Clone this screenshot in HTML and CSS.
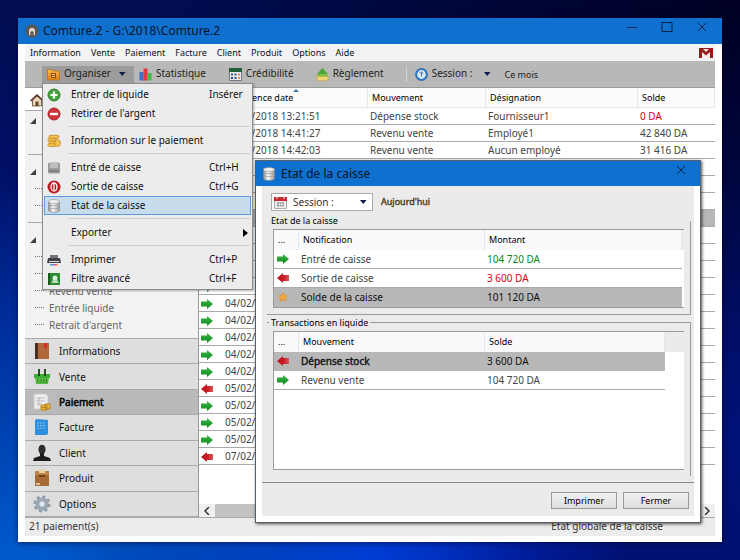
FILE: index.html
```html
<!DOCTYPE html>
<html lang="fr">
<head>
<meta charset="utf-8">
<title>Comture.2</title>
<link rel="stylesheet" href="styles.css">
</head>
<body>
<svg class="defs" aria-hidden="true">
  <defs>
    <linearGradient id="gGreen" x1="0" y1="0" x2="0" y2="1"><stop offset="0" stop-color="#3fb648"/><stop offset="1" stop-color="#0a8a1c"/></linearGradient>
    <linearGradient id="gRed" x1="0" y1="0" x2="1" y2="0"><stop offset="0" stop-color="#b80f18"/><stop offset=".6" stop-color="#cc1f27"/><stop offset="1" stop-color="#d85a5e"/></linearGradient>
    <linearGradient id="gSilver" x1="0" y1="0" x2="1" y2="0"><stop offset="0" stop-color="#8e8e8e"/><stop offset=".4" stop-color="#fafafa"/><stop offset="1" stop-color="#9a9a9a"/></linearGradient>
    <linearGradient id="gOrange" x1="0" y1="0" x2="0" y2="1"><stop offset="0" stop-color="#fbb84a"/><stop offset="1" stop-color="#e08412"/></linearGradient>
    <symbol id="in" viewBox="0 0 12 10"><path d="M0 2.500h6V0l6 5-6 5V7.500H0z" fill="url(#gGreen)"/></symbol>
    <symbol id="out" viewBox="0 0 12 10"><path d="M12 2H6V0L0 5l6 5V8h6z" fill="url(#gRed)"/></symbol>
    <symbol id="star" viewBox="0 0 12 12"><path d="M6 .5l1.700 3.600 3.800.5-2.800 2.700.8 3.900L6 9.500l-3.500 1.700.8-3.900L.5 4.600l3.800-.5z" fill="#f0a840" stroke="#d8922e" stroke-width=".8"/></symbol>
    <symbol id="db" viewBox="0 0 14 14"><path d="M1.500 2.500v9c0 1 2.500 2 5.500 2s5.500-1 5.500-2v-9z" fill="url(#gSilver)" stroke="#888" stroke-width=".6"/><path d="M1.500 5.500c1 1.500 10 1.500 11 0M1.500 8.500c1 1.500 10 1.500 11 0" fill="none" stroke="#999" stroke-width=".7"/><ellipse cx="7" cy="2.500" rx="5.500" ry="2" fill="#eee" stroke="#999" stroke-width=".6"/></symbol>
    <symbol id="coins" viewBox="0 0 14 14"><g fill="#f4c552" stroke="#bf8420" stroke-width=".8"><rect x="1" y="9.500" width="8" height="3" rx="1.400"/><rect x="2" y="6.800" width="8" height="3" rx="1.400"/><rect x="1" y="4" width="8" height="3" rx="1.400"/><rect x="2" y="1.300" width="10" height="3" rx="1.400"/><ellipse cx="10.500" cy="9" rx="2.800" ry="3.500"/></g></symbol>
    <symbol id="down" viewBox="0 0 8 5"><path d="M1 0h6.500L4.250 4z" fill="#101a48"/></symbol>
    <symbol id="node" viewBox="0 0 6 6"><path d="M6 0v6H0z" fill="#404040"/></symbol>
  </defs>
</svg>

<main class="window">
  <header class="titlebar">
    <svg class="i14" viewBox="0 0 14 14"><circle cx="7" cy="7" r="6.500" fill="#5c5650"/><path d="M4 11V5.500L5.500 4h3L10 5.500V11H8.500V7.500h-3V11z" fill="#d8d2cb"/></svg>
    <h1>Comture.2 - G:\2018\Comture.2</h1>
    <div class="winctl">
      <button aria-label="Réduire"><svg viewBox="0 0 12 12"><path d="M1 6.500h10"/></svg></button>
      <button aria-label="Agrandir"><svg viewBox="0 0 12 12"><path d="M1 1.500h10v9H1z"/></svg></button>
      <button aria-label="Fermer"><svg viewBox="0 0 12 12"><path d="M2 2l8 8M10 2l-8 8"/></svg></button>
    </div>
  </header>
  <div class="client">
    <nav class="menubar">
      <button>Information</button><button>Vente</button><button>Paiement</button><button>Facture</button><button>Client</button><button>Produit</button><button>Options</button><button>Aide</button>
      <svg class="mail" viewBox="0 0 14 10"><path d="M0 0h14v10H0z" fill="#fbeeee"/><path d="M0 0h3l4 4 4-4h3v10h-3V4L7 7.500 3 4v6H0z" fill="#a3141b"/><path d="M0 .500h14" stroke="#a3141b"/></svg>
    </nav>

    <div class="toolbar">
      <div class="organise">
        <button class="tool tool-open">
          <svg class="i13" viewBox="0 0 13 13"><path d="M.5 1.500H5L6 3h6.500v9H.5z" fill="url(#gOrange)" stroke="#b86e14" stroke-width=".7"/><path d="M4 5h5v5H4z" fill="#8a4a0a"/><path d="M5 6h3v1H5zM5 8h3v1H5z" fill="#fbd28a"/></svg>
          <span>Organiser</span><svg class="caret"><use href="#down"/></svg>
        </button>
        <div class="menu">
          <button class="item"><svg class="i14" viewBox="0 0 14 14"><circle cx="7" cy="7" r="6" fill="#45a33c" stroke="#2d7a28"/><path d="M7 3.500v7M3.500 7h7" stroke="#fff" stroke-width="2.200"/></svg><span>Entrer de liquide</span><kbd>Insérer</kbd></button>
          <button class="item"><svg class="i14" viewBox="0 0 14 14"><circle cx="7" cy="7" r="6" fill="#cf3238" stroke="#a5252a"/><path d="M3 7h8" stroke="#fff" stroke-width="2.400"/></svg><span>Retirer de l'argent</span></button>
          <hr>
          <button class="item"><svg class="i14"><use href="#coins"/></svg><span>Information sur le paiement</span></button>
          <hr>
          <button class="item"><svg class="i14" viewBox="0 0 14 14"><rect x="1" y="1.500" width="12" height="11" rx="1.500" fill="#9b9b9b"/><path d="M3 2h8v5H3z" fill="#bdbdbd"/><path d="M2 9h10v2H2z" fill="#808080"/></svg><span>Entré de caisse</span><kbd>Ctrl+H</kbd></button>
          <button class="item"><svg class="i14" viewBox="0 0 14 14"><circle cx="7" cy="7" r="6.500" fill="#c3161f"/><ellipse cx="7" cy="7" rx="3" ry="4" fill="none" stroke="#fff" stroke-width="1.300"/><path d="M7 4v6" stroke="#fff" stroke-width="1.300"/></svg><span>Sortie de caisse</span><kbd>Ctrl+G</kbd></button>
          <button class="item item-active"><svg class="i14"><use href="#db"/></svg><span>Etat de la caisse</span></button>
          <hr>
          <button class="item"><svg class="i14"></svg><span>Exporter</span><svg class="sub" viewBox="0 0 5 8"><path d="M0 0l5 4-5 4z"/></svg></button>
          <hr>
          <button class="item"><svg class="i14" viewBox="0 0 14 14"><path d="M3 2h8v4H3z" fill="#777"/><path d="M1 5h12l1 5H0z" fill="#3f4247"/><path d="M2 8h10v1H2z" fill="#ddd"/><path d="M2 10h10l1 3H1z" fill="#efe6f4"/><path d="M3 11h3v1.500H3z" fill="#3aa6dd"/><path d="M6 11h3v1.500H6z" fill="#de4fa8"/><path d="M9 11h2v1.500H9z" fill="#f08a3c"/></svg><span>Imprimer</span><kbd>Ctrl+P</kbd></button>
          <button class="item"><svg class="i14" viewBox="0 0 14 14"><path d="M2 1h11v12H2z" fill="#2c8a33"/><path d="M1 1h2v12H1z" fill="#195a20"/><circle cx="8" cy="6" r="2.500" fill="#d9f2d8"/><path d="M4 11l2-3h4l2 3z" fill="#b5dcb4"/></svg><span>Filtre avancé</span><kbd>Ctrl+F</kbd></button>
        </div>
      </div>
      <button class="tool"><svg class="i13" viewBox="0 0 13 13"><path d="M.5 4h4v8.500h-4z" fill="#3c6fc9"/><path d="M4.500.5h4v12h-4z" fill="#dd3a44"/><path d="M8.500 5h4v7.500h-4z" fill="#4db34a"/></svg><span>Statistique</span></button>
      <button class="tool tool-cred"><svg class="i13" viewBox="0 0 13 13"><path d="M.5.500h12v12H.5z" fill="#e8ecf0" stroke="#778"/><path d="M0 0h13v4H0z" fill="#20613a"/><path d="M2 5.500h2v2H2zM5.500 5.500h2v2h-2zM2 9h2v2H2zM5.500 9h2v2h-2z" fill="#34507c"/><path d="M9 5.500h2v2H9zM9 9h2v2H9z" fill="#e0913a"/></svg><span>Crédibilité</span></button>
      <button class="tool tool-regl"><svg class="i13" viewBox="0 0 13 13"><path d="M6.500 0L12 6H1z" fill="#4ea53c"/><path d="M1 6h11v3H1z" fill="#7fbf4c"/><path d="M1 8.500h11v4H1z" fill="#f0d478" stroke="#c9a23c" stroke-width=".6"/></svg><span>Règlement</span></button>
      <i class="vr"></i>
      <button class="tool"><svg class="i13" viewBox="0 0 13 13"><circle cx="6.500" cy="6.500" r="5.400" fill="#d8e8f7" stroke="#2f73bd" stroke-width="2"/><path d="M6.500 3.500v5M4.500 5h4" stroke="#5d7f9f" fill="none"/></svg><span>Session :</span><svg class="caret caret-sess"><use href="#down"/></svg></button>
      <span class="period">Ce mois</span>
    </div>

    <div class="body">
      <aside class="side">
        <div class="home"><svg class="i14" viewBox="0 0 14 14"><path d="M2.500 7v6h9V7L7 3z" fill="#e9d9ba" stroke="#5a4836" stroke-width=".8"/><path d="M0 7.500L7 1l7 6.500-1 1L7 3 1 8.500z" fill="#5a3420"/><path d="M5.500 8.500h3V13h-3z" fill="#6b432a"/></svg></div>
        <ul class="tree">
          <li><svg class="node"><use href="#node"/></svg></li>
          <li></li><li class="cut"></li>
          <li><svg class="node"><use href="#node"/></svg></li>
          <li class="leaf"></li><li class="leaf"></li><li class="cut"></li>
          <li><svg class="node"><use href="#node"/></svg></li>
          <li class="leaf"></li><li class="leaf"></li>
          <li class="leaf">Revenu vente</li><li class="leaf">Entrée liquide</li><li class="leaf">Retrait d'argent</li>
        </ul>
        <nav class="nav">
          <a href="#"><svg class="i18" viewBox="0 0 18 18"><path d="M2 1h14v16H2z" fill="#b0683a"/><path d="M2 1h3v16H2z" fill="#4b2d1c"/><path d="M11 1h3v6l-1.500-1.500L11 7z" fill="#d32a2a"/></svg>Informations</a>
          <a href="#"><svg class="i18" viewBox="0 0 18 18"><path d="M1 6h16v4H1z" fill="#3fae35"/><path d="M2 10h14l-1 6H3z" fill="#58bd42"/><path d="M6 1v7M12 1v7" stroke="#1b3a1a" stroke-width="1.800"/><path d="M5 11v4M8 11v4M11 11v4M13.500 11v4" stroke="#2d8427"/></svg>Vente</a>
          <a href="#" class="current"><svg class="i18" viewBox="0 0 18 18"><path d="M1 1h12l2 2v13H1z" fill="#eee" stroke="#c8c8c8"/><path d="M3 5h9M3 8h9M3 11h6M6 4v9" stroke="#bbb"/><path d="M8 12h6v5H8zM12 11h5v5h-5z" fill="#efba45" stroke="#b98220"/><path d="M8 14.500h6" stroke="#b98220"/></svg>Paiement</a>
          <a href="#"><svg class="i18" viewBox="0 0 18 18"><path d="M2 2l2-1 11 1v14l-2 1H2z" fill="#2d8fe0"/><path d="M4 5h9M4 7.500h9M4 10h9" stroke="#7cc0f5" stroke-dasharray="2 1"/></svg>Facture</a>
          <a href="#"><svg class="i18" viewBox="0 0 18 18"><ellipse cx="9" cy="5.500" rx="3.600" ry="4.800" fill="#2d2d2d"/><path d="M7 9h4v3l6 2 1 3H0l1-3 6-2z" fill="#1c1c1c"/></svg>Client</a>
          <a href="#"><svg class="i18" viewBox="0 0 18 18"><path d="M2 2h14v15H2z" fill="#a76c36"/><path d="M2 2h14v4H2z" fill="#bf8448"/><path d="M6 0h6v4H6z" fill="#e7d3ae"/><path d="M6 7h6" stroke="#5b3717" stroke-width="1.500"/><path d="M3 14h4v2H3z" fill="#d9bd94"/></svg>Produit</a>
          <a href="#"><svg class="i18" viewBox="0 0 18 18"><circle cx="9" cy="9" r="7" fill="none" stroke="#8d9aa5" stroke-width="3" stroke-dasharray="3 2.500"/><circle cx="9" cy="9" r="4.600" fill="none" stroke="#9aa8b4" stroke-width="4"/><circle cx="9" cy="9" r="2.400" fill="#e3e8ec"/></svg>Options</a>
        </nav>
      </aside>

      <section class="list">
        <table class="grid">
          <colgroup><col class="c-date"><col class="c-mov"><col class="c-des"><col></colgroup>
          <thead><tr><th class="sorted">ence date<svg class="sort" viewBox="0 0 6 3"><path d="M3 0l3 3H0z"/></svg></th><th>Mouvement</th><th>Désignation</th><th>Solde</th></tr></thead>
          <tbody>
            <tr><td><svg class="arrow"><use href="#out"/></svg>04/02/2018 13:21:51</td><td>Dépense stock</td><td>Fournisseur1</td><td class="neg">0 DA</td></tr>
            <tr><td><svg class="arrow"><use href="#in"/></svg>04/02/2018 14:41:27</td><td>Revenu vente</td><td>Employé1</td><td>42 840 DA</td></tr>
            <tr><td><svg class="arrow"><use href="#in"/></svg>04/02/2018 14:42:03</td><td>Revenu vente</td><td>Aucun employé</td><td>31 416 DA</td></tr>
            <tr><td></td><td></td><td></td><td></td></tr>
            <tr><td></td><td></td><td></td><td></td></tr>
            <tr><td></td><td></td><td></td><td></td></tr>
            <tr class="sel"><td></td><td></td><td></td><td></td></tr>
            <tr><td></td><td></td><td></td><td></td></tr>
            <tr><td></td><td></td><td></td><td></td></tr>
            <tr><td></td><td></td><td></td><td></td></tr>
            <tr><td><svg class="arrow"><use href="#in"/></svg></td><td></td><td></td><td></td></tr>
            <tr><td><svg class="arrow"><use href="#in"/></svg>04/02/</td><td></td><td></td><td></td></tr>
            <tr><td><svg class="arrow"><use href="#in"/></svg>04/02/</td><td></td><td></td><td></td></tr>
            <tr><td><svg class="arrow"><use href="#in"/></svg>04/02/</td><td></td><td></td><td></td></tr>
            <tr><td><svg class="arrow"><use href="#in"/></svg>04/02/</td><td></td><td></td><td></td></tr>
            <tr><td><svg class="arrow"><use href="#in"/></svg>04/02/</td><td></td><td></td><td></td></tr>
            <tr><td><svg class="arrow"><use href="#out"/></svg>05/02/</td><td></td><td></td><td></td></tr>
            <tr><td><svg class="arrow"><use href="#in"/></svg>05/02/</td><td></td><td></td><td></td></tr>
            <tr><td><svg class="arrow"><use href="#in"/></svg>05/02/</td><td></td><td></td><td></td></tr>
            <tr><td><svg class="arrow"><use href="#in"/></svg>05/02/</td><td></td><td></td><td></td></tr>
            <tr><td><svg class="arrow"><use href="#out"/></svg>07/02/</td><td></td><td></td><td></td></tr>
          </tbody>
        </table>
        <div class="hscroll">
          <svg viewBox="0 0 6 8"><path d="M5 0L1 4l4 4"/></svg><i></i><svg viewBox="0 0 6 8"><path d="M1 0l4 4-4 4"/></svg>
        </div>
      </section>
    </div>
    <footer class="status"><span>21 paiement(s)</span><span>Etat globale de la caisse</span></footer>
  </div>

  <section class="dialog" role="dialog" aria-labelledby="dlgTitle">
    <header class="dlg-title">
      <svg class="i14"><use href="#db"/></svg><h2 id="dlgTitle">Etat de la caisse</h2>
      <button aria-label="Fermer"><svg viewBox="0 0 12 12"><path d="M2 2l8 8M10 2l-8 8"/></svg></button>
    </header>
    <div class="dlg-body">
      <div class="filter">
        <button class="session"><svg class="i13" viewBox="0 0 13 13"><path d="M.5 1.500h12v11H.5z" fill="#eee" stroke="#aaa"/><path d="M0 1h13v4H0z" fill="#c8262e"/><path d="M3 0v3M10 0v3" stroke="#eee"/><path d="M3 7h7M3 9.500h7" stroke="#8a8a8a" stroke-width="1.500" stroke-dasharray="2 .6"/></svg><span>Session :</span><svg class="caret"><use href="#down"/></svg></button>
        <span class="strong">Aujourd'hui</span>
      </div>
      <div class="group group-cash">
        <h3>Etat de la caisse</h3>
        <div class="box">
          <table class="mini">
            <colgroup><col class="m-ico"><col class="m-a"><col></colgroup>
            <thead><tr><th>...</th><th>Notification</th><th>Montant</th></tr></thead>
            <tbody>
              <tr><td><svg class="arrow"><use href="#in"/></svg></td><td>Entré de caisse</td><td class="pos">104 720 DA</td></tr>
              <tr><td><svg class="arrow"><use href="#out"/></svg></td><td>Sortie de caisse</td><td class="neg">3 600 DA</td></tr>
              <tr class="sel"><td><svg class="arrow"><use href="#star"/></svg></td><td>Solde de la caisse</td><td>101 120 DA</td></tr>
            </tbody>
          </table>
        </div>
      </div>
      <div class="group group-trans">
        <h3>Transactions en liquide</h3>
        <div class="box">
          <table class="mini mini-short">
            <colgroup><col class="m-ico"><col class="m-a"><col></colgroup>
            <thead><tr><th>...</th><th>Mouvement</th><th>Solde</th></tr></thead>
            <tbody>
              <tr class="sel"><td><svg class="arrow"><use href="#out"/></svg></td><td><span class="strong">Dépense stock</span></td><td>3 600 DA</td></tr>
              <tr><td><svg class="arrow"><use href="#in"/></svg></td><td>Revenu vente</td><td>104 720 DA</td></tr>
            </tbody>
          </table>
        </div>
      </div>
      <div class="actions"><button>Imprimer</button><button>Fermer</button></div>
    </div>
  </section>
</main>
</body>
</html>
```
FILE: styles.css
```css
* { box-sizing: border-box; }
html, body { height: 100%; }
body {
  margin: 0;
  padding: 18px;
  background:
    radial-gradient(ellipse at 100% 0, #000024 0, rgba(0, 0, 36, 0) 55%),
    radial-gradient(ellipse at 0 105%, #0060d4 0, rgba(0, 80, 212, 0) 50%),
    radial-gradient(ellipse at 50% 105%, #0030d8 0, rgba(0, 44, 210, 0) 50%),
    linear-gradient(#000d50, #00127c 60%, #001070);
  font: 10px/16px "Noto Sans", "DejaVu Sans", sans-serif;
  color: #111;
  overflow: hidden;
}
.defs { position: absolute; width: 0; height: 0; }
button { font: inherit; color: inherit; background: none; border: 0; margin: 0; padding: 0; text-align: left; white-space: nowrap; }
h1, h2, h3 { margin: 0; font-weight: 400; }
kbd { font: inherit; }
svg { display: block; flex: none; }
.i13 { width: 13px; height: 13px; }
.i14 { width: 14px; height: 14px; }
.i18 { width: 18px; height: 18px; }
.caret { width: 8px; height: 5px; }
.arrow { width: 12px; height: 10px; }
.strong { -webkit-text-stroke: 0.4px currentColor; }

.window {
  position: relative;
  height: 100%;
  display: flex;
  flex-direction: column;
  background: #fff;
  box-shadow: 0 1px 5px rgba(0, 0, 30, .6);
}
.titlebar { display: flex; align-items: center; gap: 4px; height: 26px; padding: 0 14px 0 7px; background: #0f70d0; flex: none; }
.titlebar h1 { font-size: 12px; line-height: 24px; flex: 1; color: #071426; }
.winctl { display: flex; gap: 23px; align-self: flex-start; padding-top: 3px; }
.winctl svg, .dlg-title button svg { width: 12px; height: 12px; fill: none; stroke: #0b2340; }

.client { flex: 1; min-height: 0; display: flex; flex-direction: column; margin: 0 7px 6px; }
.menubar { display: flex; align-items: center; gap: 10px; height: 17px; padding: 0 2px 0 5px; background: #f2f3f5; font-size: 9px; flex: none; }
.mail { width: 14px; height: 10px; margin-left: auto; }

.toolbar { display: flex; align-items: stretch; height: 27px; padding: 5px 0 0 17px; background: #b8b8b8; border-bottom: 1px solid #9a9a9a; flex: none; }
.organise { position: relative; z-index: 2; width: 92px; }
.tool { display: flex; align-items: center; gap: 4px; height: 17px; padding-left: 5px; line-height: 15px; color: #222; }
.tool span { align-self: flex-start; }
.tool-open { width: 100%; background: #9c9c9c; }
.tool-open .caret { margin-left: auto; margin-right: 8px; }
.tool-cred { margin-left: 18px; }
.tool-regl { margin-left: 17px; }
.caret-sess { margin-left: 7px; }
.vr { width: 1px; height: 15px; margin: 1px 3px 0 22px; background: #d4d4d4; }
.period { margin-left: 13px; line-height: 17px; font-size: 9px; color: #222; }

.menu {
  position: absolute; left: 0; top: 17px; width: 211px;
  padding: 1px; background: #ececec; border: 1px solid #8c8c8c;
  box-shadow: 1px 1px 2px rgba(0, 0, 0, .3);
}
.item { display: flex; align-items: center; width: 100%; height: 19px; padding: 0 5px 0 2px; border: 1px solid transparent; line-height: 15px; }
.item span { margin-left: 10px; flex: 1; }
.item kbd { width: 36px; }
.item-active { background: #c7ddee; border-color: #5d9bdc; }
.sub { width: 5px; height: 8px; margin-right: -3px; }
.menu hr { height: 1px; margin: 3px 1px 4px 24px; border: 0; background: #cfcfcf; }

.body { flex: 1; min-height: 0; display: flex; }
.side { width: 174px; flex: none; display: flex; flex-direction: column; background: #f2f2f2; border-right: 1px solid #9a9a9a; }
.home { height: 23px; padding: 5px 0 0 5px; background: #fff; border-bottom: 1px solid #aaa; flex: none; }
.tree { flex: 1; min-height: 0; margin: 0; padding: 1px 0 0 10px; list-style: none; color: #666; overflow: hidden; }
.tree li { height: 17px; display: flex; align-items: center; gap: 5px; }
.tree .cut::before { content: ""; flex: 1; margin-left: -7px; border-top: 1px solid #aaa; }
.node { width: 6px; height: 6px; margin-left: -5px; }
.leaf::before { content: ""; width: 9px; border-top: 1px dotted #777; }
.nav { display: grid; grid-auto-rows: 1fr; height: 179px; border-top: 1px solid #aaa; flex: none; }
.nav a { display: flex; align-items: center; gap: 8px; padding-left: 8px; background: #dedede; border-bottom: 1px solid #aaa; color: #111; text-decoration: none; }
.nav .current { background: #bababa; -webkit-text-stroke: 0.5px #000; }

.list { flex: 1; min-width: 0; display: flex; flex-direction: column; background: #fff; }
table { border-collapse: separate; border-spacing: 0; table-layout: fixed; width: 100%; }
th { font-weight: 400; font-size: 9px; text-align: left; white-space: nowrap; padding: 0 0 0 4px; }
td { white-space: nowrap; padding: 0 0 0 2px; }
.grid th { position: relative; height: 20px; background: #fbfbfc; border-bottom: 1px solid #e2e8ef; border-right: 1px solid #e2e8ef; color: #000; }
.grid td { height: 17px; line-height: 16px; border-bottom: 1px solid #aaa; color: #444; }
.c-date { width: 169px; } .c-mov { width: 118px; } .c-des { width: 152px; }
.grid .sorted { padding-left: 53px; }
.sort { position: absolute; top: 1px; left: 94px; width: 6px; height: 3px; fill: #3f7ba8; }
td .arrow { display: inline-block; vertical-align: middle; margin-right: 12px; }
.grid .sel td { background: #b8b8b8; }
.grid .neg, .mini .neg { color: #d4000f; }
.mini .pos { color: #0a8a1c; }
.hscroll { margin-top: auto; height: 13px; display: flex; align-items: center; gap: 5px; padding: 0 5px; background: #f0f0f0; }
.hscroll i { flex: 1; height: 100%; background: #c2c2c2; }
.hscroll svg { width: 6px; height: 8px; fill: none; stroke: #333; stroke-width: 1.5; }
.status { display: flex; justify-content: space-between; height: 19px; padding: 0 52px 0 4px; background: #ececec; border-top: 1px solid #aaa; color: #333; flex: none; }

.dialog {
  position: absolute; left: 237px; top: 142px; right: 21px; bottom: 19px; z-index: 1;
  display: flex; flex-direction: column;
  background: #fff; border: 1px solid #54606c;
  box-shadow: 1px 1px 3px rgba(0, 0, 0, .7);
}
.dlg-title { display: flex; align-items: center; gap: 5px; height: 25px; padding: 0 13px 0 6px; background: #0f70d0; flex: none; }
.dlg-title h2 { flex: 1; font-size: 12px; color: #071426; }
.dlg-title button { align-self: flex-start; padding-top: 3px; }
.dlg-body { flex: 1; min-height: 0; display: flex; flex-direction: column; margin: 0 6px 6px; background: #ebebeb; }
.filter { display: flex; align-items: center; gap: 8px; padding: 7px 0 0 9px; font-size: 9px; color: #443c28; }
.session { display: flex; align-items: center; gap: 6px; width: 102px; height: 18px; padding: 0 5px 0 2px; background: #fff; border: 1px solid #aaa; color: #333; font-size: 10px; }
.session .caret { margin-left: auto; }
.group { margin: 0 3px 0 5px; padding: 0 6px; border-right: 1px solid #999; }
.group h3 { width: max-content; margin: -8px 0 0 -4px; padding: 0 2px; font-size: 9px; color: #000; background: #ebebeb; }
.group-cash { margin-top: 10px; border-bottom: 1px solid #999; padding-bottom: 6px; }
.group-trans { flex: 1; min-height: 0; display: flex; flex-direction: column; margin-top: 7px; padding-bottom: 6px; border-top: 1px solid #999; }
.box { border: 1px solid #999; border-right: 0; padding-right: 2px; background: linear-gradient(#ebebeb 20px, #fff 20px); }
.group-trans .box { flex: 1; }
.mini th { height: 20px; background: #fafafc; border-right: 1px solid #e2e8ef; color: #000; }
.mini td { height: 19px; line-height: 18px; background: #fff; border-bottom: 1px solid #aaa; color: #444; }
.mini .sel td { background: #b8b8b8; color: #111; border-bottom-color: #b8b8b8; }
.mini td .arrow { display: block; margin: 0 0 0 1px; }
.mini-short { width: calc(100% - 17px); }
.m-ico { width: 25px; } .m-a { width: 186px; }
.actions { display: flex; justify-content: flex-end; gap: 6px; height: 34px; margin-top: 6px; padding: 9px 5px 0; border-top: 1px solid #888; font-size: 9px; }
.actions button { width: 66px; height: 17px; line-height: 15px; text-align: center; border: 1px solid #999; background: linear-gradient(#f2f2f2, #dedede); color: #000; }
```
